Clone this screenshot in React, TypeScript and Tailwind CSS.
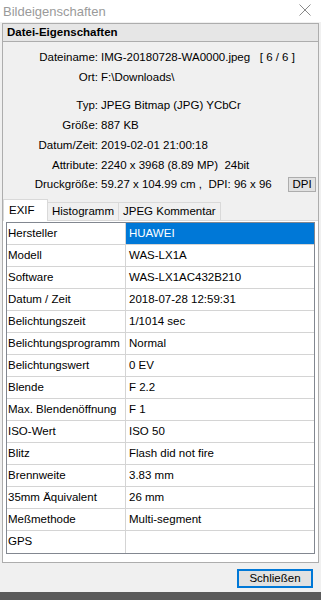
const props: [string, string][] = [
  ["Typ:", "JPEG Bitmap (JPG) YCbCr"],
  ["Größe:", "887 KB"],
  ["Datum/Zeit:", "2019-02-01 21:00:18"],
  ["Attribute:", "2240 x 3968 (8.89 MP)  24bit"],
];

const exif: [string, string][] = [
  ["Hersteller", "HUAWEI"],
  ["Modell", "WAS-LX1A"],
  ["Software", "WAS-LX1AC432B210"],
  ["Datum / Zeit", "2018-07-28 12:59:31"],
  ["Belichtungszeit", "1/1014 sec"],
  ["Belichtungsprogramm", "Normal"],
  ["Belichtungswert", "0 EV"],
  ["Blende", "F 2.2"],
  ["Max. Blendenöffnung", "F 1"],
  ["ISO-Wert", "ISO 50"],
  ["Blitz", "Flash did not fire"],
  ["Brennweite", "3.83 mm"],
  ["35mm Äquivalent", "26 mm"],
  ["Meßmethode", "Multi-segment"],
  ["GPS", ""],
];

function PropRow({ label, value, h = "h-[20px]" }: { label: string; value: string; h?: string }) {
  return (
    <div className={`flex items-center ${h}`}>
      <span className="w-[95px] text-right">{label}</span>
      <span className="ml-[3px] whitespace-pre">{value}</span>
    </div>
  );
}

export default function App() {
  return (
    <div className="w-[321px] h-[600px] flex flex-col bg-[#f0f0f0] text-[11.5px] text-black font-['Liberation_Sans',Arial,sans-serif] overflow-hidden">
      {/* Title bar */}
      <div className="h-[22px] bg-white flex items-center justify-between pl-[3px] pr-[10px] shrink-0">
        <span className="text-[13px] text-[#9a9a9a] leading-none">Bildeigenschaften</span>
        <svg width="12" height="12" viewBox="0 0 12 12" className="mt-[-2px]">
          <path d="M0.5 0.5 L11.5 11.5 M11.5 0.5 L0.5 11.5" stroke="#8a8a8a" strokeWidth="1" />
        </svg>
      </div>

      {/* Group box */}
      <div className="mt-[1px] ml-[2px] w-[317px] h-[540px] border border-[#adadad] flex flex-col shrink-0">
        <div className="h-[18px] bg-[#e6e6e6] border-b border-[#adadad] flex items-center pl-[4px] font-bold">
          Datei-Eigenschaften
        </div>

        <div className="pt-[6px] flex flex-col">
          <PropRow label="Dateiname:" value="IMG-20180728-WA0000.jpeg   [ 6 / 6 ]" />
          <PropRow label="Ort:" value="F:\Downloads\" />
          <div className="h-[8px]" />
          {props.map(([l, v], i) => (
            <PropRow key={l} label={l} value={v} h={i < 3 ? "h-[20px]" : "h-[19px]"} />
          ))}
          <div className="flex items-center h-[19px]">
            <span className="w-[95px] text-right">Druckgröße:</span>
            <span className="ml-[3px] whitespace-pre">59.27 x 104.99 cm ,  DPI: 96 x 96</span>
            <span className="ml-auto mr-[2px] h-[15px] w-[28px] justify-center border border-[#adadad] bg-[#e1e1e1] flex items-center leading-none">
              DPI
            </span>
          </div>
        </div>

        {/* Tabs */}
        <div className="mt-[5px] flex items-end h-[21px] relative z-10 whitespace-nowrap">
          <div className="h-[22px] w-[45px] bg-white border border-b-0 border-[#d9d9d9] flex items-center pl-[5px] -mb-[1px]">
            EXIF
          </div>
          <div className="h-[18px] px-[4px] border border-l-0 border-b-0 border-[#d9d9d9] flex items-center">
            Histogramm
          </div>
          <div className="h-[18px] px-[4px] border border-l-0 border-b-0 border-[#d9d9d9] flex items-center">
            JPEG Kommentar
          </div>
        </div>

        <div className="flex-1 bg-white border-t border-[#d9d9d9] px-[3px] pt-[1px]">
          <div className="border border-[#828790] bg-white">
            {exif.map(([k, v], i) => (
              <div key={k} className={`flex h-[22px] ${i < exif.length - 1 ? "border-b border-[#d4d4d4]" : ""}`}>
                <div className="w-[119px] border-r border-[#d4d4d4] flex items-center pl-[1px] whitespace-nowrap">
                  {k}
                </div>
                <div
                  className={`flex-1 flex items-center pl-[3px] whitespace-nowrap ${
                    i === 0 ? "bg-[#0078d7] text-white" : ""
                  }`}
                >
                  {v}
                </div>
              </div>
            ))}
          </div>
        </div>
      </div>

      {/* Footer */}
      <div className="flex justify-end pr-[8px] pt-[6px] shrink-0">
        <button className="w-[76px] h-[19px] border-2 border-[#0078d7] bg-[#e1e1e1] flex items-center justify-center leading-none">
          Schließen
        </button>
      </div>
      <div className="flex-1" />
      <div className="h-[8px] bg-[#5a5a5a] shrink-0" />
    </div>
  );
}
